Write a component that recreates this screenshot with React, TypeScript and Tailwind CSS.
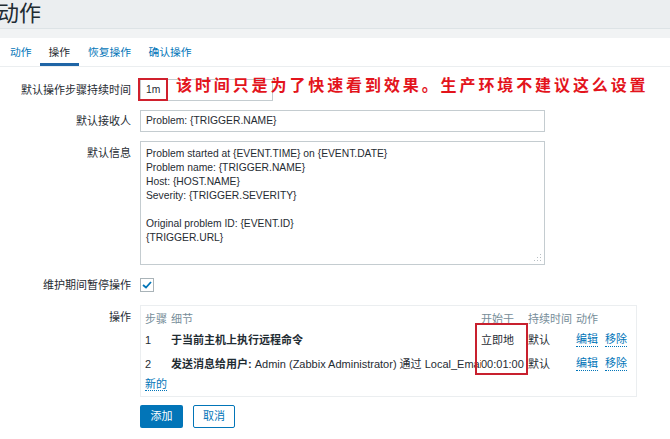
import React from 'react';

const FONT = '"Liberation Sans", Arial, "Noto Sans CJK SC", sans-serif';

function Label({ children, pt }: { children: React.ReactNode; pt: string }) {
  return <div className={`w-[131px] shrink-0 text-right text-[11px] leading-[14px] text-[#1f2c33] ${pt}`}>{children}</div>;
}

function Link({ children }: { children: React.ReactNode }) {
  return <span className="border-b border-dotted border-[#0275b8] text-[11px] leading-[13px] text-[#0275b8]">{children}</span>;
}

const COLS = 'grid grid-cols-[26px_310px_47px_48px_auto]';

export default function App() {
  const message = [
    'Problem started at {EVENT.TIME} on {EVENT.DATE}',
    'Problem name: {TRIGGER.NAME}',
    'Host: {HOST.NAME}',
    'Severity: {TRIGGER.SEVERITY}',
    '',
    'Original problem ID: {EVENT.ID}',
    '{TRIGGER.URL}',
  ];

  return (
    <div className="relative h-[439px] w-[670px] overflow-hidden bg-white" style={{ fontFamily: FONT }}>
      {/* page header */}
      <div className="h-[28px] bg-[#ebeef0]">
        <h1 className="ml-[-3px] pt-[2px] text-[22px] leading-[24px] font-normal text-[#1f2c33]">动作</h1>
      </div>
      <div className="h-[10px] border-t border-[#dde3e6] bg-[#f1f3f4]" />

      {/* tabs */}
      <div className="flex h-[29px] items-stretch border-b border-[#ebeef0] pl-[1.5px] text-[10.75px]">
        <div className="flex items-center px-[8.5px] text-[#0275b8]">动作</div>
        <div className="flex items-center border-b-[3px] border-[#1f65a6] px-[8.5px] pt-[3px] text-[#1f2c33]">操作</div>
        <div className="flex items-center pr-[8.5px] pl-[9.5px] text-[#0275b8]">恢复操作</div>
        <div className="flex items-center px-[9px] text-[#0275b8]">确认操作</div>
      </div>

      <div className="flex flex-col">
        {/* duration */}
        <div className="mt-[12px] flex">
          <Label pt="pt-[4px]">默认操作步骤持续时间</Label>
          <div className="ml-[9px] flex h-[22px] w-[133px] items-center border border-[#c4ccd0] px-[5px] text-[10.3px] text-[#1f2c33]">1m</div>
        </div>

        {/* recipient */}
        <div className="mt-[9px] flex">
          <Label pt="pt-[4px]">默认接收人</Label>
          <div className="ml-[9px] flex h-[22px] w-[405px] items-center border border-[#c4ccd0] px-[5px] text-[10.3px] text-[#1f2c33]">
            Problem: {'{TRIGGER.NAME}'}
          </div>
        </div>

        {/* message */}
        <div className="mt-[9px] flex">
          <Label pt="pt-[5px]">默认信息</Label>
          <div className="relative ml-[9px] h-[124px] w-[405px] border border-[#c4ccd0] px-[5px] pt-[5px] text-[10.3px] leading-[14px] text-[#1f2c33]">
            {message.map((line, i) => (
              <div key={i} className="h-[14px]">{line}</div>
            ))}
            <svg className="absolute right-[2px] bottom-[2px]" width="8" height="8" viewBox="0 0 8 8">
              <g fill="#b8c0c4">
                <rect x="6" y="0" width="1" height="1" />
                <rect x="3" y="3" width="1" height="1" />
                <rect x="6" y="3" width="1" height="1" />
                <rect x="0" y="6" width="1" height="1" />
                <rect x="3" y="6" width="1" height="1" />
                <rect x="6" y="6" width="1" height="1" />
              </g>
            </svg>
          </div>
        </div>

        {/* pause in maintenance */}
        <div className="mt-[13px] flex items-center">
          <Label pt="pt-0">维护期间暂停操作</Label>
          <div className="ml-[9px] flex h-[14px] w-[14px] items-center justify-center border border-[#a9b3b8] bg-white">
            <svg width="10" height="8" viewBox="0 0 10 8">
              <path d="M1 4 L4 6.5 L9 1" fill="none" stroke="#0275b8" strokeWidth="1.8" />
            </svg>
          </div>
        </div>

        {/* operations */}
        <div className="mt-[13px] flex">
          <Label pt="pt-[5px]">操作</Label>
          <div className="ml-[9px] h-[92px] w-[497px] border border-[#ebeef0] px-[4px] pt-[6px] text-[11px] leading-[14px] text-[#1f2c33]">
            <div className={`${COLS} text-[#768d99]`}>
              <div>步骤</div>
              <div>细节</div>
              <div>开始于</div>
              <div>持续时间</div>
              <div>动作</div>
            </div>
            <div className={`mt-[7px] ${COLS}`}>
              <div>1</div>
              <div className="font-bold">于当前主机上执行远程命令</div>
              <div>立即地</div>
              <div>默认</div>
              <div className="flex gap-[7px]">
                <Link>编辑</Link>
                <Link>移除</Link>
              </div>
            </div>
            <div className={`mt-[10px] ${COLS}`}>
              <div>2</div>
              <div className="overflow-hidden whitespace-nowrap pr-[2px]">
                <span className="font-bold">发送消息给用户:</span> Admin (Zabbix Administrator) 通过 Local_Email
              </div>
              <div className="whitespace-nowrap">00:01:00</div>
              <div>默认</div>
              <div className="flex gap-[7px]">
                <Link>编辑</Link>
                <Link>移除</Link>
              </div>
            </div>
            <div className="mt-[6px]">
              <Link>新的</Link>
            </div>
          </div>
        </div>

        {/* buttons */}
        <div className="mt-[8px] ml-[140px] flex gap-[10px] text-[11px]">
          <button className="h-[23px] w-[43px] rounded-[2px] bg-[#0275b8] text-white">添加</button>
          <button className="h-[23px] w-[42px] rounded-[2px] border border-[#0275b8] bg-white text-[#0275b8]">取消</button>
        </div>
      </div>

      {/* screenshot annotations */}
      <div className="absolute top-[78px] left-[138px] h-[23px] w-[30px] border-2 border-[#d0202d]" />
      <div
        className="absolute top-[75px] left-[176px] text-[16px] leading-[18px] font-bold tracking-[2.9px] whitespace-nowrap text-[#e3141c]"
        style={{ fontFamily: '"Noto Sans CJK SC", sans-serif' }}
      >
        该时间只是为了快速看到效果。生产环境不建议这么设置
      </div>
      <div className="absolute top-[323px] left-[475px] h-[52px] w-[53px] border-2 border-[#c8202e]" />
    </div>
  );
}
